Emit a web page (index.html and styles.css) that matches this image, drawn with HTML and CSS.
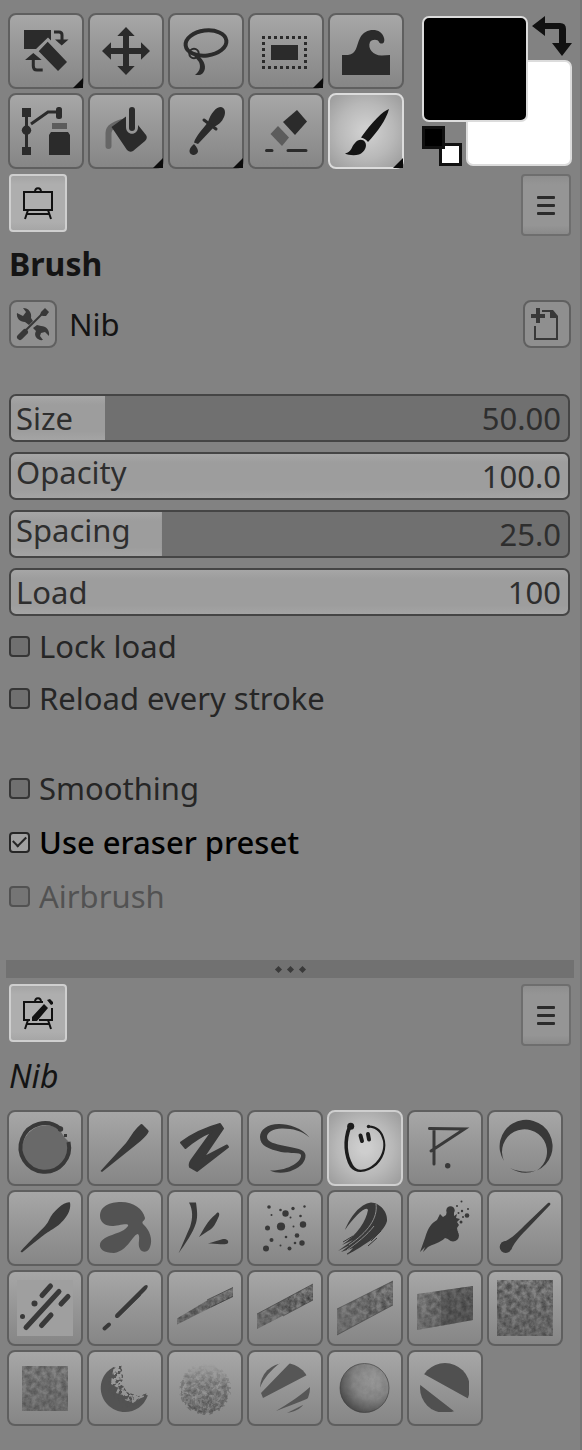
FILE: index.html
```html
<!DOCTYPE html>
<html lang="en">

<head>
    <title>Brush</title>
    <meta charset="utf-8">
    <meta name="viewport" content="width=device-width, initial-scale=1.0">
    <link rel="stylesheet" href="styles.css">
</head>

<body>

    <!-- shared filters and gradients -->
    <svg class="defs" aria-hidden="true">
        <defs>
            <filter id="grain" x="0" y="0" width="1" height="1" color-interpolation-filters="sRGB">
                <feTurbulence type="fractalNoise" baseFrequency="0.2" numOctaves="4" seed="4" />
                <feColorMatrix values="0 0 0 0 0.25  0 0 0 0 0.25  0 0 0 0 0.25  1.9 0 0 0 -0.5" />
                <feComposite in2="SourceGraphic" operator="in" />
            </filter>
            <filter id="speckle" x="0" y="0" width="1" height="1" color-interpolation-filters="sRGB">
                <feTurbulence type="fractalNoise" baseFrequency="0.28" numOctaves="2" seed="9" />
                <feColorMatrix values="0 0 0 0 0.32  0 0 0 0 0.32  0 0 0 0 0.32  9 0 0 0 -4.3" />
                <feComposite in2="SourceGraphic" operator="in" />
            </filter>
            <linearGradient id="fade" x1="0" y1="0" x2="0" y2="1">
                <stop offset="0" stop-opacity="0" />
                <stop offset="0.35" stop-opacity="0.5" />
                <stop offset="1" stop-opacity="1" />
            </linearGradient>
            <linearGradient id="fade-x" x1="0" y1="0" x2="1" y2="0">
                <stop offset="0" stop-opacity="0.55" />
                <stop offset="0.6" stop-opacity="1" />
                <stop offset="1" stop-opacity="1" />
            </linearGradient>
            <radialGradient id="ball" cx="0.65" cy="0.35" r="0.7">
                <stop offset="0" stop-color="#9c9c9c" />
                <stop offset="0.55" stop-color="#868686" />
                <stop offset="1" stop-color="#4c4c4c" />
            </radialGradient>
            <clipPath id="disc">
                <circle cx="38" cy="38" r="25" />
            </clipPath>
        </defs>
    </svg>

    <header class="toolbox">
        <div class="tools">
            <button class="tile more" aria-label="Transform">
                <svg viewBox="2 2 72 72">
                    <path d="M16 17H43V27.500L40 24.500L28 36H16Z M39.700 28.700L59 49L50 58L30.700 38.300Z M47 26.500H60.500L53.700 32.500Z M17 47H33.700L25.300 40Z" />
                    <path class="line w3" d="M46 19H51Q54 19 54 22V27M25.300 46V53Q25.300 57 29 57H34.700" />
                </svg>
            </button>
            <button class="tile" aria-label="Move">
                <svg viewBox="2 2 72 72">
                    <path d="M38 14L46.700 23H41V35H53V29.300L62 38L53 46.700V41H41V53H46.700L38 62L29.300 53H35V41H23V46.700L14 38L23 29.300V35H35V23H29.300Z" />
                </svg>
            </button>
            <button class="tile" aria-label="Free select">
                <svg viewBox="2 2 72 72">
                    <ellipse class="line w4" cx="38" cy="30" rx="20.500" ry="12.500" transform="rotate(-7 38 30)" />
                    <circle class="line w2" cx="26" cy="40.500" r="4.700" />
                    <path d="M23 39L30 42C37 48 39 55 35 60C33 62.500 30 62 27 62C32 58 33 54 31 49L27 44Z" />
                </svg>
            </button>
            <button class="tile more" aria-label="Rectangle select">
                <svg viewBox="2 2 72 72">
                    <path class="line w3" stroke-dasharray="3 3" d="M14 24.500H59M14 54.500H59M15.500 23V56M57.500 23V56" />
                    <path d="M23 32H50V47H23Z" />
                </svg>
            </button>
            <button class="tile" aria-label="Warp">
                <svg viewBox="2 2 72 72">
                    <path d="M14 42H20C29 41 28 33 32 25C36 17 46 15 52 19C56 22 57 27 56 29C55 31 52 31 51 29C50 26 44 26 42 29C39 36 46 43 54 42.500L62 42V62H14Z" />
                </svg>
            </button>
            <button class="tile" aria-label="Paths">
                <svg viewBox="2 2 72 72">
                    <path d="M14 15H23V24H14Z M14 54H23V62H14Z M43 39H60L62 42V62H41V42Z" />
                    <circle cx="18.500" cy="37.300" r="4.700" />
                    <rect x="48" y="14" width="6" height="12" rx="2.500" />
                    <rect class="soft" x="44" y="30" width="15" height="6" />
                    <path class="line w3" d="M18.500 20V58M23 31L40 19H50" />
                </svg>
            </button>
            <button class="tile more" aria-label="Bucket fill">
                <svg viewBox="2 2 72 72">
                    <path class="line soft-line w6 round" d="M20.500 53V40C20.500 34 26 32 34 29" />
                    <path d="M23.500 34L38 23.500V34C38 43 50 43 50 34V32L58 42Q60 45 57 48L45 58Q42 60 39 57Z" />
                    <path class="line w6 round" d="M44 17V35" />
                </svg>
            </button>
            <button class="tile more" aria-label="Color picker">
                <svg viewBox="2 2 72 72">
                    <path d="M40 29C43 20 48 14 53 14C57 15 58 19 56 24C54 29 50 32 46 34L30 51L26 49.500C28 43 34 37 40 29Z M26 51C29 54 30 57 30 58.500C29 63 22 63 21.500 58.500C21.500 55 24 53 26 51Z" />
                    <path class="line w3 round" d="M36 27L48 36" />
                </svg>
            </button>
            <button class="tile" aria-label="Eraser">
                <svg viewBox="2 2 72 72">
                    <path d="M49 17L59 28.500L47 42L35 29Z" />
                    <path class="soft" d="M30 33L41 44.500L34 53L22.500 41Z" />
                    <path class="line w3 round" d="M18.500 57.500H24M40 57.500H58" />
                </svg>
            </button>
            <button class="tile more active" aria-label="Paintbrush">
                <svg viewBox="2 2 72 72">
                    <path d="M61 16C55 18 44 29 33 44.500C36 45 38.500 47 40 49C50 38 58 27 61 16Z M17 60.500C24 59 23 54 27 50C30 46 35 46 37 49C39.500 53 37 59 31 61.500C26 63 20 62 17 60.500Z" />
                </svg>
            </button>
        </div>

        <div class="colors">
            <button class="swatch back" aria-label="Background color"></button>
            <button class="swatch front" aria-label="Foreground color"></button>
            <button class="swap" aria-label="Swap colors">
                <svg viewBox="0 0 40 40">
                    <path d="M0 10L13 0V7H28Q34 7 34 13V27H40L30 40L20 27H27V13H13V20Z" />
                </svg>
            </button>
            <button class="reset" aria-label="Default colors">
                <svg viewBox="0 0 40 40">
                    <path d="M17 17H40V40H17Z" />
                    <path fill="#fff" d="M20 20H37V37H20Z" />
                    <path d="M0 0H23V23H0Z" />
                    <path fill="#000" d="M3 3H20V20H3Z" />
                </svg>
            </button>
        </div>
    </header>

    <main>
        <nav class="tabs">
            <button class="tab" aria-label="Tool options">
                <svg viewBox="0 0 32 32">
                    <path class="line w2" d="M2 5H30V23H2ZM6 23L3 32M26 23L29 32M5 27H27M13 5C13 0 19 0 19 5" />
                </svg>
            </button>
            <button class="menu" aria-label="Tab menu"><span></span><span></span><span></span></button>
        </nav>

        <h1>Brush</h1>

        <div class="preset">
            <button class="small" aria-label="Preset settings">
                <svg viewBox="0 0 48 48">
                    <path class="line w6 round" d="M11 37L16 32" />
                    <path class="line w2" d="M15 32L34 13" />
                    <path d="M32 12L36 8L40 12L37 16H34L31 15Z M14 8L17 12L14 16L8 13C7 18 11 22 16 22L20 25L24 21L22 18C23 13 20 8 14 8Z M24 28L28 25L32 26C37 26 41 30 40 36L36 32L32 33L31 36L34 40C29 41 24 36 27 31Z" />
                </svg>
            </button>
            <span class="preset-name">Nib</span>
            <button class="small" aria-label="New preset">
                <svg viewBox="0 0 48 48">
                    <path class="line w2" d="M12 26V39H34V18M19 11H28" />
                    <path class="line w4" d="M8 16H22M15 8V23" />
                    <path d="M27 10H30L35 16V18H27Z" />
                </svg>
            </button>
        </div>

        <form class="options">
            <div class="slider">
                <input type="range" id="size" min="0" max="100" value="17" style="--fill: 16.9%">
                <label for="size">Size</label>
                <input type="text" class="value" value="50.00" aria-label="Size value">
            </div>
            <div class="slider">
                <input type="range" id="opacity" min="0" max="100" value="100" style="--fill: 100%">
                <label for="opacity" class="descends">Opacity</label>
                <input type="text" class="value" value="100.0" aria-label="Opacity value">
            </div>
            <div class="slider">
                <input type="range" id="spacing" min="0" max="100" value="27" style="--fill: 27.1%">
                <label for="spacing" class="descends">Spacing</label>
                <input type="text" class="value" value="25.0" aria-label="Spacing value">
            </div>
            <div class="slider">
                <input type="range" id="load" min="0" max="100" value="100" style="--fill: 100%">
                <label for="load">Load</label>
                <input type="text" class="value" value="100" aria-label="Load value">
            </div>
        </form>

        <div class="checks">
            <label class="check"><input type="checkbox">Lock load</label>
            <label class="check"><input type="checkbox">Reload every stroke</label>
        </div>
        <div class="checks extra">
            <label class="check"><input type="checkbox">Smoothing</label>
            <label class="check on"><input type="checkbox" checked>Use eraser preset</label>
            <label class="check off"><input type="checkbox" disabled>Airbrush</label>
        </div>
    </main>

    <div class="splitter"><i></i><i></i><i></i></div>

    <section>
        <nav class="tabs">
            <button class="tab" aria-label="Brushes">
                <svg viewBox="0 0 32 32">
                    <path class="line w2" d="M21 5H2V23H8M17 23H30V11M6 23L3 32M26 23L29 32M5 27H27M13 5C13 0 19 0 19 5" />
                    <path d="M22 7L26 11L15 24H10V20Z M25 3L28 2L31 5V7L29 8Z" />
                </svg>
            </button>
            <button class="menu" aria-label="Tab menu"><span></span><span></span><span></span></button>
        </nav>

        <h2>Nib</h2>

        <div class="brushes">
            <button class="tile" aria-label="Round wash">
                <svg viewBox="2 2 72 72">
                    <path fill="#696969" d="M62 32L58 28L52 19A24 24 0 1 0 62 32Z" />
                    <path class="line w4" d="M61.500 32A24.300 24.300 0 1 1 53 18.500" />
                    <circle cx="53.500" cy="19" r="2.700" />
                    <path d="M57 24H60V27H57Z" />
                </svg>
            </button>
            <button class="tile" aria-label="Chisel">
                <svg viewBox="2 2 72 72">
                    <path d="M53 15Q54.500 13 56 15L61 20Q62.500 21 61 23C57 29 50 34 45 38L15 62L13.500 61L39 33C43 28 46 21 53 15Z" />
                </svg>
            </button>
            <button class="tile" aria-label="Zigzag">
                <svg viewBox="2 2 72 72">
                    <path class="joined" d="M14 32.500Q31 20 53 14L56 18.500L36 48L60 35.500L61 37L30 61L23 57Q22 54 24.500 50L45 21.500Q31 27 18.500 38Z" />
                </svg>
            </button>
            <button class="tile" aria-label="Curve">
                <svg viewBox="2 2 72 72">
                    <path d="M62.500 27.500C55 18 42 14 32 14C20 14 13 20 13 27C13 36 22 39 34 42C44 44 53 42 54 45C55 51 42 61 23 60.500C30 64 40 63 46 60C54 57 59 51 58.500 45C58 39 48 38 38 36C28 34 20 32 20 27C20 22 27 18 36 18.500C46 19 54 20 62.500 27.500Z" />
                </svg>
            </button>
            <button class="tile active" aria-label="Nib">
                <svg viewBox="2 2 72 72">
                    <circle cx="23.700" cy="16.300" r="3.500" />
                    <circle cx="41.500" cy="16.500" r="1.700" />
                    <path d="M21 16C15 30 17 47 23 57C28 63 35 63 42 60C54 55 60 42 58 31C56 20 50 16 42 15.500V17.500C50 18 54 23 56 31C58 43 50 54 41 58C34 61 29 60 26 55C20 44 19 31 24.500 17Z" />
                    <path class="line w4 round" d="M33.500 25.500L35 31M41 24L42 29.500" />
                </svg>
            </button>
            <button class="tile" aria-label="Pen">
                <svg viewBox="2 2 72 72">
                    <path class="line w3 round" d="M22.500 18.500L57.500 19L24 41M27 19V54" />
                    <circle cx="40.700" cy="55.700" r="2.700" />
                </svg>
            </button>
            <button class="tile" aria-label="Crescent">
                <svg viewBox="2 2 72 72">
                    <path d="M17 51A26.500 26.500 0 1 1 50 60.500A22.500 22.500 0 1 0 17 51Z M23 58Q36 66 49 60.500Q36 64 23 58Z" />
                </svg>
            </button>
            <button class="tile" aria-label="Paint stroke">
                <svg viewBox="2 2 72 72">
                    <path d="M63 12.500C58 11 46 21 42 30C39 37 29 44 13.500 61.500L15 62.500C33 48 39 43 46 39C56 33 65 22 63 12.500Z" />
                </svg>
            </button>
            <button class="tile" aria-label="Blob">
                <svg viewBox="2 2 72 72">
                    <path fill="#535353" d="M13 26C13 16 23 12 34 12C47 12 56 19 58 28C58 31 54 31 56 34C63 40 66 50 63 57C61 63 55 63 53 59C50 54 54 47 51 44C46 44 41 61 27 63C17 63 12 59 13 54C16 44 35 45 41 36C43 32 30 36 25 36C18 36 13 32 13 26Z" />
                </svg>
            </button>
            <button class="tile" aria-label="Grass">
                <svg viewBox="2 2 72 72">
                    <path d="M22 12.500H29C30 20 31 26 29 33C26 43 18 54 11.500 63.500C16 53 20 44 23 37C26 28 26 20 22 12.500Z M49 24C51 21 53 23 52 26C49 33 46 39 41 41L32 47C37 39 40 31 49 24Z M41 53.500C47 52 52 50 56 49C60 48.500 62 51 61 53C58 56 50 53 41 53.500Z" />
                </svg>
            </button>
            <button class="tile" aria-label="Dots">
                <svg viewBox="2 2 72 72">
                    <circle cx="22" cy="17" r="1.800" />
                    <circle cx="24.500" cy="25" r="1" />
                    <circle cx="33.500" cy="20" r="1.300" />
                    <circle cx="38.500" cy="23.500" r="3.200" />
                    <circle cx="20.500" cy="38" r="2.500" />
                    <circle cx="34" cy="36.500" r="4.100" />
                    <circle cx="24.500" cy="50" r="2" />
                    <circle cx="39" cy="47" r="1.300" />
                    <circle cx="19" cy="58.500" r="3" />
                    <circle cx="33.500" cy="55.500" r="1" />
                    <circle cx="42.500" cy="58.500" r="2" />
                    <circle cx="46" cy="18.500" r="1.700" />
                    <circle cx="57.500" cy="16.500" r="1.200" />
                    <circle cx="43.500" cy="27.500" r="1" />
                    <circle cx="53.500" cy="26" r="1.300" />
                    <circle cx="56" cy="34.500" r="3.200" />
                    <circle cx="46.500" cy="36.500" r="1" />
                    <circle cx="50" cy="45.500" r="2.300" />
                    <circle cx="55" cy="53" r="2.700" />
                    <circle cx="48" cy="53" r="1.300" />
                </svg>
            </button>
            <button class="tile" aria-label="Bristles">
                <svg viewBox="2 2 72 72">
                    <path d="M18 40C23 27 33 14 44 12.500C53 13 61 22 60 31C57 43 38 55 20 65L26 58L14 62L23 55L11 61L26 50L15 55C31 44 39 31 41 20C39 15 27 27 18 40Z" />
                    <path class="scratch" d="M49 14C51 28 41 42 22 55M47 36C40 45 30 53 20 60" />
                    <path class="line w1" d="M54 41L44 51M50 48L41 56M26 46L16 52M33 56L20 64" />
                </svg>
            </button>
            <button class="tile" aria-label="Splatter">
                <svg viewBox="2 2 72 72">
                    <path d="M13 62L18 48C21 37 25 33 30 30L33 24L36 27L39 25L40 21L47 22V26L50 24L49 28L53 29L50 32L52 35L50 38L51 43L44 50L38 48C33 53 26 54 21 57L16 62L18 57Z" />
                    <circle cx="43.500" cy="20.500" r="4.200" />
                    <circle cx="46" cy="45.500" r="6" />
                    <circle cx="60" cy="25.500" r="2.300" />
                    <circle cx="51.500" cy="23" r="1" />
                    <circle cx="54" cy="32" r="1.500" />
                    <circle cx="55" cy="21" r="1.200" />
                    <circle cx="54.500" cy="11.500" r="1" />
                    <circle cx="50" cy="16" r="1" />
                    <circle cx="61" cy="19" r="1" />
                    <circle cx="56" cy="27" r="1" />
                </svg>
            </button>
            <button class="tile" aria-label="Comet">
                <svg viewBox="2 2 72 72">
                    <circle cx="18.700" cy="57" r="6" />
                    <path d="M61 13C63 12 64 14 63 15L42 37C34 45 28 51 24 60L14 53C25 49 31 42 38 35Z" />
                </svg>
            </button>
            <button class="tile" aria-label="Rain">
                <svg viewBox="2 2 72 72">
                    <path fill="#9f9f9f" d="M10 10H66V66H10Z" />
                    <path class="line w5 round" d="M19 57.500L52 21.500M35 25.500L43.500 16M54 34L61 26.500M34.500 55.500L44 45" />
                    <circle cx="27.500" cy="33.500" r="3" />
                    <circle cx="15.500" cy="46.500" r="2.500" />
                </svg>
            </button>
            <button class="tile" aria-label="Dash">
                <svg viewBox="2 2 72 72">
                    <path class="line w4 round" d="M17.500 58.500L22 54.500M30 46L52 24.500" />
                    <path d="M31.500 47.500L28.500 44.500L56 17Q59 14 60.500 15.500Q61.500 17 58 21Z" />
                </svg>
            </button>
            <button class="tile" aria-label="Charcoal thin">
                <svg viewBox="2 2 72 72">
                    <path class="wash" d="M10 48.500L41 30L66 17.500V26.500L10 54.500Z" />
                    <path filter="url(#grain)" opacity="0.8" d="M10 48.500L41 30L66 17.500V26.500L10 54.500Z" />
                    <path class="line w1" opacity="0.7" d="M40 30L66 17.500M44 37L66 26.500" />
                </svg>
            </button>
            <button class="tile" aria-label="Charcoal medium">
                <svg viewBox="2 2 72 72">
                    <path class="wash" d="M10 44L66 14V30L10 59Z" />
                    <path filter="url(#grain)" fill="url(#fade-x)" d="M10 44L66 14V30L10 59Z" />
                    <path class="line w1" opacity="0.6" d="M10 44L66 14M36 46L66 30" />
                </svg>
            </button>
            <button class="tile" aria-label="Charcoal wide">
                <svg viewBox="2 2 72 72">
                    <path class="wash" d="M10 39L66 11V35L10 65Z" />
                    <path filter="url(#grain)" fill="url(#fade-x)" opacity="0.8" d="M10 39L66 11V35L10 65Z" />
                    <path class="line w1" opacity="0.5" d="M10 39L66 11M10 65L66 35" />
                </svg>
            </button>
            <button class="tile" aria-label="Charcoal block">
                <svg viewBox="2 2 72 72">
                    <path class="wash" fill="url(#fade-x)" d="M10 24L66 16V50L10 60Z" />
                    <path class="wash" d="M34 20.500L66 16V50L34 56Z" />
                    <path filter="url(#grain)" fill="url(#fade-x)" opacity="0.9" d="M10 24L66 16V50L10 60Z" />
                </svg>
            </button>
            <button class="tile" aria-label="Canvas texture">
                <svg viewBox="2 2 72 72">
                    <path class="wash" d="M10 10H66V66H10Z" />
                    <path filter="url(#grain)" opacity="0.8" d="M10 10H66V66H10Z" />
                </svg>
            </button>
            <button class="tile" aria-label="Paper texture">
                <svg viewBox="2 2 72 72">
                    <path class="wash" d="M15 16H61V61H15Z" />
                    <path filter="url(#grain)" opacity="0.6" d="M15 16H61V61H15Z" />
                </svg>
            </button>
            <button class="tile" aria-label="Sponge">
                <svg viewBox="2 2 72 72">
                    <path fill="#535353" d="M27 17C12 24 10 43 20 54C33 68 55 63 61 45L52 49L46 53L38 50L36 45L29 43L31 38L24 34L25 25Z" />
                    <path filter="url(#speckle)" d="M23 19L34 14L36 26L35 34L40 42L51 46L61 43L56 54L36 58L20 40Z" />
                </svg>
            </button>
            <button class="tile" aria-label="Spray">
                <svg viewBox="2 2 72 72">
                    <circle cx="38" cy="39" r="26" filter="url(#speckle)" fill="url(#fade)" opacity="0.6" />
                    <circle cx="38" cy="39" r="24" filter="url(#grain)" fill="url(#fade)" opacity="0.7" />
                </svg>
            </button>
            <button class="tile" aria-label="Stripes">
                <svg viewBox="2 2 72 72">
                    <path fill="#565656" clip-path="url(#disc)" d="M12 40C16 29 23 21 33 13H12Z M14 43L44 12H52L60 25L16 48Z M29 61C40 54 52 47 64 36L62 48C52 52 40 57 29 61Z M40 63L56 55L53 62Z" />
                </svg>
            </button>
            <button class="tile" aria-label="Sphere">
                <svg viewBox="2 2 72 72">
                    <circle cx="37.500" cy="38" r="24.500" fill="url(#ball)" />
                    <circle cx="37.500" cy="38" r="24.500" filter="url(#grain)" opacity="0.12" />
                    <circle class="line w1" cx="37.500" cy="38" r="24.500" opacity="0.6" />
                </svg>
            </button>
            <button class="tile" aria-label="Split disc">
                <svg viewBox="2 2 72 72">
                    <path fill="#505050" clip-path="url(#disc)" d="M15 23L62 49V10H15Z M12 34L48 62H12Z" />
                </svg>
            </button>
        </div>
    </section>

</body>

</html>
```

FILE: styles.css
```css
* {
    box-sizing: border-box;
}

body {
    margin: 0;
    min-height: 100vh;
    padding: 13px 8px 20px;
    background-color: #828282;
    border-right: 2px solid #767676;
    font-family: "Noto Sans", sans-serif;
    font-size: 31px;
    line-height: 44px;
    color: #141414;
}

button {
    padding: 0;
    font: inherit;
    color: #2b2b2b;
}

svg {
    display: block;
    fill: currentColor;
}

.defs {
    position: absolute;
    width: 0;
    height: 0;
}

/* strokes used by the icons */
.line {
    fill: none;
    stroke: currentColor;
}

.round {
    stroke-linecap: round;
}

.w1 {
    stroke-width: 1;
}

.w2 {
    stroke-width: 2;
}

.w3 {
    stroke-width: 3;
}

.w4 {
    stroke-width: 4;
}

.w5 {
    stroke-width: 5;
}

.w6 {
    stroke-width: 6;
}

.soft {
    fill: #5c5c5c;
}

.soft-line {
    stroke: #666;
}

.joined {
    stroke: currentColor;
    stroke-width: 2;
    stroke-linejoin: round;
}

.scratch {
    fill: none;
    stroke: #8c8c8c;
    stroke-width: 1;
}

.wash {
    opacity: 0.25;
}

/* toolbox */
.toolbox {
    display: flex;
    gap: 18px;
}

.tools {
    display: grid;
    grid-template-columns: repeat(5, 76px);
    gap: 4px;
}

.tile {
    position: relative;
    width: 76px;
    height: 76px;
    border: 2px solid #5f5f5f;
    border-radius: 8px;
    background: linear-gradient(#a7a7a7, #999 40%, #868686);
}

.active {
    color: #141414;
    border-color: #dcdcdc;
    background: radial-gradient(#cecece 10%, #b8b8b8 55%, #9a9a9a);
}

.more::after {
    content: "";
    position: absolute;
    right: -1px;
    bottom: -1px;
    width: 10px;
    height: 10px;
    background-color: #0c0c0c;
    clip-path: polygon(100% 0, 100% 100%, 0 100%);
}

.colors {
    position: relative;
    width: 150px;
    height: 150px;
    margin-top: 3px;
}

.colors button {
    position: absolute;
    color: #111;
}

.swatch {
    width: 106px;
    height: 106px;
    border: 2px solid #dcdcdc;
    border-radius: 7px;
}

.front {
    top: 0;
    left: 0;
    background-color: #000;
}

.back {
    right: 0;
    bottom: 0;
    background-color: #fff;
}

.swap,
.reset {
    width: 40px;
    height: 40px;
    border: none;
    background: none;
}

.swap {
    top: 0;
    right: 0;
}

.reset {
    left: 0;
    bottom: 0;
}

/* dock tabs */
.tabs {
    display: flex;
    justify-content: space-between;
    align-items: flex-start;
    margin: 5px 1px 0;
}

.tab {
    width: 58px;
    height: 58px;
    border: 2px solid #cfcfcf;
    border-radius: 4px;
    background: linear-gradient(#a4a4a4, #aeaeae 15%, #aeaeae 85%, #a6a6a6);
    color: #111;
}

.tab svg {
    width: 32px;
    height: 32px;
    margin: 0 auto;
    overflow: visible;
}

.menu {
    display: flex;
    flex-direction: column;
    justify-content: center;
    align-items: center;
    gap: 5px;
    width: 50px;
    height: 62px;
    border: 2px solid #6e6e6e;
    border-radius: 4px;
    background: linear-gradient(#8e8e8e, #959595 15%, #959595 85%, #8a8a8a);
}

.menu span {
    width: 18px;
    height: 3px;
    border-radius: 1px;
    background-color: #2b2b2b;
}

h1,
h2 {
    margin: 6px 1px 0;
    font-size: 32px;
}

h2 {
    margin-top: 8px;
    font-weight: 400;
    font-style: italic;
}

.preset {
    display: flex;
    align-items: center;
    gap: 12px;
    margin: 14px 1px 0;
}

.preset-name {
    flex: 1;
}

.small {
    width: 48px;
    height: 48px;
    border: 2px solid #606060;
    border-radius: 8px;
    background-color: #8f8f8f;
    color: #383838;
}

.small svg {
    margin: -2px;
}

/* sliders */
.options {
    display: grid;
    gap: 10px;
    margin: 46px 2px 0 1px;
}

.slider {
    display: grid;
    align-items: center;
    color: #2e2e2e;
}

.slider > * {
    grid-area: 1 / 1;
}

.slider input[type="range"] {
    appearance: none;
    width: 100%;
    height: 48px;
    margin: 0;
    border: 2px solid #454545;
    border-radius: 7px;
    background: linear-gradient(#a6a6a6, #9d9d9d 20%, #9d9d9d 80%, #a4a4a4) no-repeat 0 0 / var(--fill) 100% #707070;
}

.slider input[type="range"]::-webkit-slider-thumb {
    appearance: none;
    width: 0;
    height: 44px;
}

.slider label {
    justify-self: start;
    padding-left: 7px;
    pointer-events: none;
}

.slider .descends {
    padding-bottom: 8px;
    line-height: 40px;
}

.value {
    justify-self: end;
    width: 130px;
    height: 44px;
    padding: 0 9px 0 0;
    border: none;
    background: none;
    font: inherit;
    color: inherit;
    text-align: right;
}

/* tick boxes */
.checks {
    display: grid;
    gap: 8px;
    margin: 8px 1px 0;
    color: #262626;
}

.extra {
    gap: 10px;
    margin-top: 46px;
}

.check {
    display: flex;
    align-items: center;
    gap: 9px;
}

.check input {
    appearance: none;
    width: 21px;
    height: 21px;
    margin: 0;
    border: 2px solid #363636;
    border-radius: 4px;
    background-color: #707070;
}

.check input:checked {
    display: grid;
    place-items: center;
    border-color: #262626;
    background-color: #a0a0a0;
}

.check input:checked::before {
    content: "";
    width: 11px;
    height: 6px;
    margin-bottom: 4px;
    border: solid #262626;
    border-width: 0 0 2px 2px;
    transform: rotate(-45deg);
}

.on {
    font-weight: 500;
    color: #000;
}

.off {
    color: #525252;
}

.check input:disabled {
    border-color: #525252;
    background-color: #757575;
}

.splitter {
    display: flex;
    justify-content: center;
    align-items: center;
    gap: 7px;
    height: 18px;
    margin: 42px -2px 6px;
    background-color: #717171;
}

.splitter i {
    width: 5px;
    height: 5px;
    background-color: #3a3a3a;
    transform: rotate(45deg);
}

/* brush grid */
.brushes {
    display: grid;
    grid-template-columns: repeat(auto-fill, 76px);
    gap: 4px;
    margin: 12px 0 0 -1px;
}

.brushes .tile {
    color: #393939;
}

.brushes .active {
    color: #1c1c1c;
    border-color: #cfcfcf;
}
```
